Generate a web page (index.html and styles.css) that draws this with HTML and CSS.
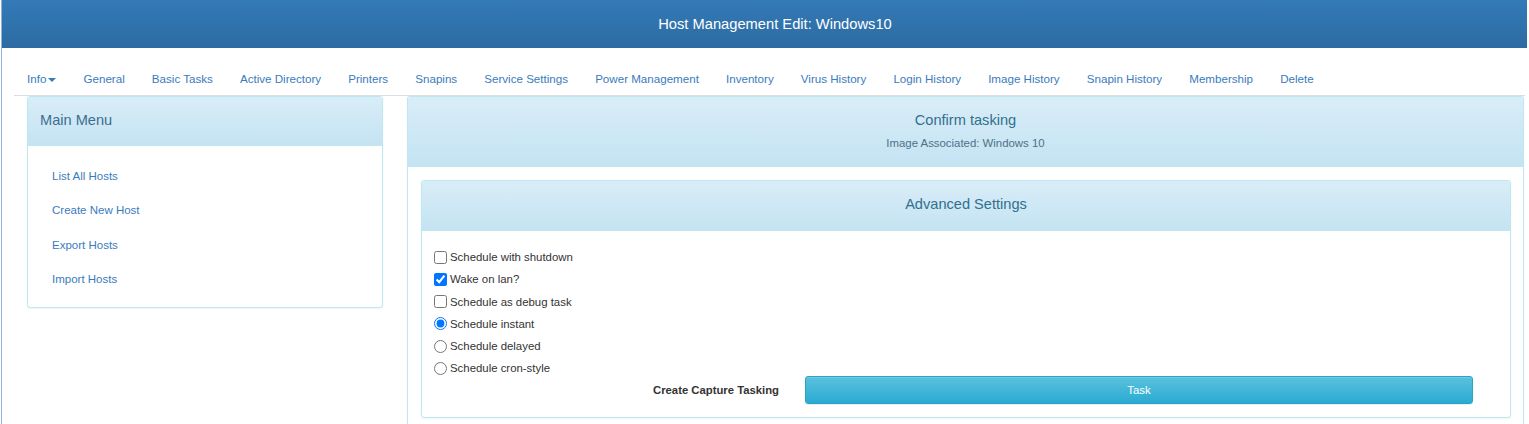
FILE: index.html
```html
<!DOCTYPE html>
<html lang="en">
<head>
<meta charset="utf-8">
<title>Host Management Edit: Windows10</title>
<link rel="stylesheet" href="styles.css">
</head>
<body>
<div class="page">
  <header class="topbar">
    <h1 class="topbar-title">Host Management Edit: Windows10</h1>
  </header>

  <nav class="tabs">
    <ul class="tab-list">
      <li><a href="#">Info<span class="caret"></span></a></li>
      <li><a href="#">General</a></li>
      <li><a href="#">Basic Tasks</a></li>
      <li><a href="#">Active Directory</a></li>
      <li><a href="#">Printers</a></li>
      <li><a href="#">Snapins</a></li>
      <li><a href="#">Service Settings</a></li>
      <li><a href="#">Power Management</a></li>
      <li><a href="#">Inventory</a></li>
      <li><a href="#">Virus History</a></li>
      <li><a href="#">Login History</a></li>
      <li><a href="#">Image History</a></li>
      <li><a href="#">Snapin History</a></li>
      <li><a href="#">Membership</a></li>
      <li><a href="#">Delete</a></li>
    </ul>
  </nav>

  <main class="content">
    <aside class="panel side-panel">
      <div class="panel-heading">
        <h2 class="panel-title side-title">Main Menu</h2>
      </div>
      <ul class="side-links">
        <li><a href="#">List All Hosts</a></li>
        <li><a href="#">Create New Host</a></li>
        <li><a href="#">Export Hosts</a></li>
        <li><a href="#">Import Hosts</a></li>
      </ul>
    </aside>

    <section class="panel main-panel">
      <div class="panel-heading center">
        <h2 class="panel-title">Confirm tasking</h2>
        <p class="panel-sub">Image Associated: Windows 10</p>
      </div>
      <div class="main-body">
        <div class="panel inner-panel">
          <div class="panel-heading center inner-heading">
            <h3 class="panel-title">Advanced Settings</h3>
          </div>
          <div class="inner-body">
            <label class="opt"><input type="checkbox"><span>Schedule with shutdown</span></label>
            <label class="opt"><input type="checkbox" checked><span>Wake on lan?</span></label>
            <label class="opt"><input type="checkbox"><span>Schedule as debug task</span></label>
            <label class="opt"><input type="radio" name="sched" checked><span>Schedule instant</span></label>
            <label class="opt"><input type="radio" name="sched"><span>Schedule delayed</span></label>
            <label class="opt"><input type="radio" name="sched"><span>Schedule cron-style</span></label>
            <div class="action-row">
              <span class="action-label">Create Capture Tasking</span>
              <button class="btn-task" type="button">Task</button>
            </div>
          </div>
        </div>
      </div>
    </section>
  </main>
</div>
</body>
</html>
```

FILE: styles.css
```css
* { box-sizing: border-box; }

html, body {
  margin: 0;
  padding: 0;
  background: #ffffff;
  height: 100%;
  overflow: hidden;
}

body {
  font-family: "Liberation Sans", Arial, sans-serif;
  font-size: 11.4px;
  color: #333333;
}

.page {
  margin-left: 1px;
  margin-right: 2px;
  border-left: 1px solid #8fb1dc;
  min-height: 100%;
}

a { color: #337ab7; text-decoration: none; }

.topbar {
  height: 48px;
  background: linear-gradient(to bottom, #337ab7 0%, #2d6ba2 100%);
  display: flex;
  align-items: center;
  justify-content: center;
}

.topbar-title {
  margin: 0;
  color: #ffffff;
  font-size: 14.7px;
  font-weight: normal;
  padding-left: 21px;
}

.tabs {
  margin: 14px 0 0 12px;
  width: 1511px;
  border-bottom: 1px solid #dddddd;
}

.tab-list {
  list-style: none;
  margin: 0 0 0 -0.5px;
  padding: 0;
  display: flex;
}

.tab-list a {
  display: block;
  padding: 0 13.55px;
  line-height: 33px;
  font-size: 11.6px;
  color: #3a7bbd;
}

.caret {
  display: inline-block;
  width: 0;
  height: 0;
  margin-left: 2px;
  vertical-align: middle;
  border-top: 4px solid #3a7bbd;
  border-left: 4px solid transparent;
  border-right: 4px solid transparent;
}

.content {
  display: flex;
  align-items: flex-start;
  gap: 24px;
  padding-left: 25px;
}

.panel {
  background: #ffffff;
  border: 1px solid #bce8f1;
  border-radius: 3px;
  box-shadow: 0 1px 2px rgba(0, 0, 0, 0.05);
  overflow: hidden;
}

.panel-heading {
  background: linear-gradient(to bottom, #d9edf7 0%, #c4e3f3 100%);
  border-bottom: 1px solid #bce8f1;
  padding: 13px 12px 15px;
  color: #31708f;
}

.panel-heading.center { text-align: center; }

.panel-title {
  margin: 0;
  font-size: 14.6px;
  font-weight: normal;
  line-height: 20px;
  color: #31708f;
}

.side-title { color: #3d6e8e; }

.panel-sub {
  margin: 5px 0 0;
  font-size: 11.4px;
  line-height: 16px;
  color: #4d7189;
}

.side-panel {
  width: 356px;
  flex: none;
}

.side-links {
  list-style: none;
  margin: 0;
  padding: 13px 0 11px 24px;
}

.side-links li {
  line-height: 34.33px;
}

.side-links a {
  font-size: 11.5px;
  color: #3a7bbd;
}

.main-panel {
  width: 1117px;
  flex: none;
  height: 360px;
  border-bottom: none;
  border-bottom-left-radius: 0;
  border-bottom-right-radius: 0;
}

.main-body {
  padding: 13px;
}

.inner-panel {
  width: 1090px;
}

.inner-heading {
  padding: 13px 12px 16px;
}

.inner-body {
  padding: 15px 12px 13px 12px;
  display: flex;
  flex-direction: column;
}

.opt {
  display: flex;
  align-items: center;
  height: 22.25px;
  font-size: 11.4px;
  color: #333333;
}

.opt input {
  width: 13px;
  height: 13px;
  margin: 0 3px 0 0;
  flex: none;
}

.action-row {
  display: flex;
  align-items: center;
  margin-top: -4px;
  height: 28px;
}

.action-label {
  width: 345px;
  text-align: right;
  font-weight: bold;
  font-size: 11.3px;
  color: #333333;
  margin-right: 26px;
}

.btn-task {
  width: 668px;
  height: 28px;
  border: 1px solid #28a4c9;
  border-radius: 3px;
  background: linear-gradient(to bottom, #5bc0de 0%, #2aabd2 100%);
  color: #ffffff;
  font-family: "Liberation Sans", Arial, sans-serif;
  font-size: 11.4px;
  padding: 0;
  box-shadow: inset 0 1px 0 rgba(255, 255, 255, 0.15), 0 1px 1px rgba(0, 0, 0, 0.075);
}
```
